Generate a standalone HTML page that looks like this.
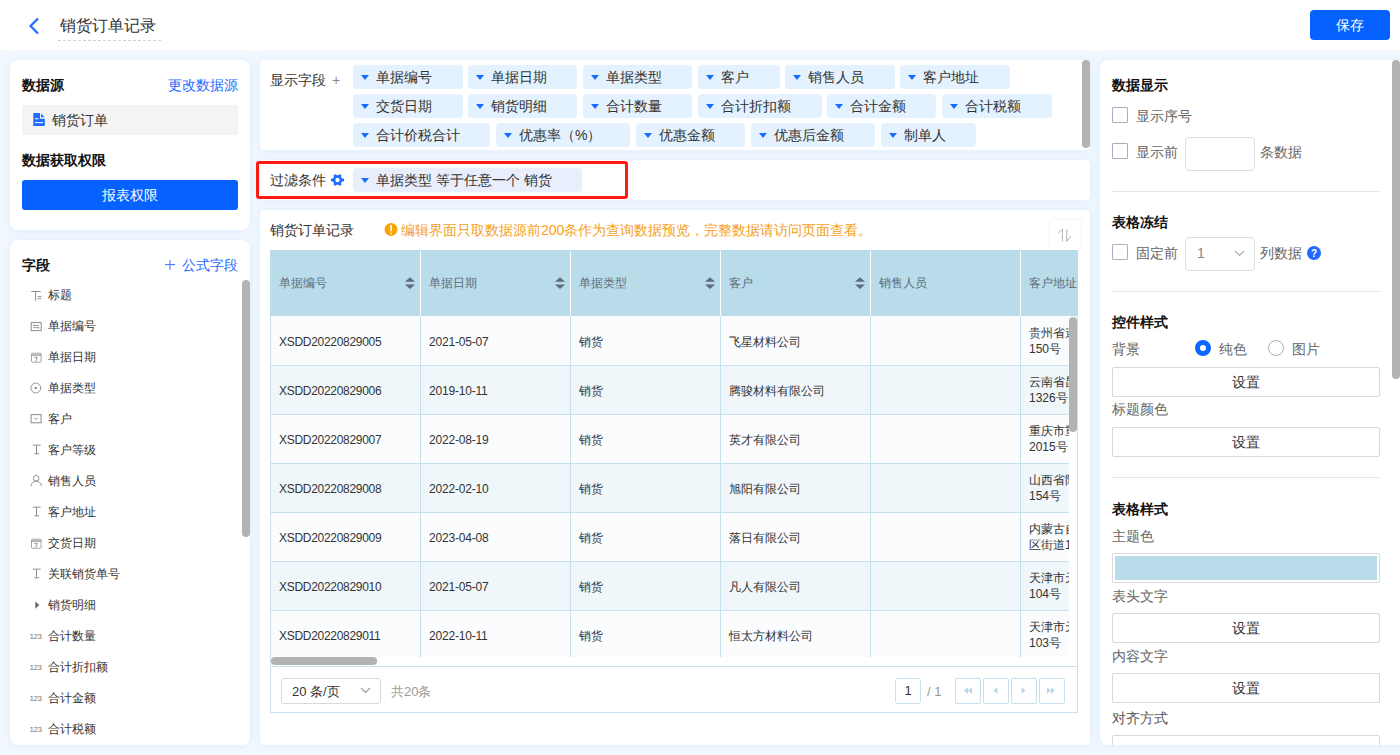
<!DOCTYPE html><html><head><meta charset="utf-8"><style>
*{box-sizing:border-box;margin:0;padding:0}
html,body{width:1400px;height:755px;overflow:hidden}
body{font-family:"Liberation Sans",sans-serif;color:#333;background:#f2f8fe;position:relative}
.abs{position:absolute}
.t{position:absolute;white-space:nowrap;line-height:1}
.hdr{left:0;top:0;width:1400px;height:50px;background:#fff}
.card{position:absolute;background:#fff;box-shadow:0 0 7px rgba(200,228,255,.5)}
.b{font-weight:bold}
.blue{color:#1f6bff}
.tag{position:absolute;height:24px;border-radius:4px;background:#e3f2fe;font-size:14px;line-height:24px;color:#333;padding-left:23px;white-space:nowrap}
.tag:before{content:"";position:absolute;left:8px;top:10px;border-left:4px solid transparent;border-right:4px solid transparent;border-top:5px solid #1a6cff}
.sb{position:absolute;background:#b3b3b3;border-radius:4px}
.btn{position:absolute;border:1px solid #d9d9d9;border-radius:2px;background:#fff;font-size:14px;text-align:center;color:#333}
.cb{position:absolute;width:16px;height:16px;border:1px solid #a9aec0;border-radius:1px;background:#fff}
.lbl{position:absolute;font-size:14px;color:#666;white-space:nowrap;line-height:1}
.sec{position:absolute;font-size:14px;font-weight:bold;color:#111;white-space:nowrap;line-height:1}
.hr{position:absolute;height:1px;background:#e6e6e6}
</style></head><body>
<div class="abs hdr"></div>
<svg class="abs" style="left:28px;top:17px" width="12" height="18" viewBox="0 0 12 18"><polyline points="10,1.5 2.5,9 10,16.5" fill="none" stroke="#1f6bff" stroke-width="2.2"/></svg>
<div class="t" style="left:60px;top:18px;font-size:16px;color:#333">销货订单记录</div>
<div class="abs" style="left:58px;top:40px;width:105px;height:1px;background:repeating-linear-gradient(90deg,#d3d3d3 0 3px,transparent 3px 5px)"></div>
<div class="abs" style="left:1310px;top:10px;width:80px;height:30px;border-radius:4px;background:#0562ff;color:#fff;font-size:14px;line-height:30px;text-align:center">保存</div>
<div class="card" style="left:10px;top:60px;width:240px;height:170px;border-radius:8px"></div>
<div class="sec" style="left:22px;top:78px">数据源</div>
<div class="t blue" style="left:168px;top:78px;font-size:14px">更改数据源</div>
<div class="abs" style="left:22px;top:105px;width:216px;height:30px;background:#f4f4f4;border-radius:2px"></div>
<svg class="abs" style="left:33px;top:113px" width="12" height="13" viewBox="0 0 12 13"><path d="M0.3 0h6.7v5.8h4.8v7.2h-11.5z" fill="#1f6bff"/><path d="M8 0.6l3.6 3.6h-3.6z" fill="#1f6bff"/><rect x="1.8" y="5.2" width="3.8" height="1" fill="#fff"/><rect x="1.8" y="9.1" width="8.3" height="1" fill="#fff"/></svg>
<div class="t" style="left:52px;top:113px;font-size:14px;color:#333">销货订单</div>
<div class="sec" style="left:22px;top:153px">数据获取权限</div>
<div class="abs" style="left:22px;top:180px;width:216px;height:30px;border-radius:3px;background:#0562ff;color:#fff;font-size:14px;line-height:30px;text-align:center">报表权限</div>
<div class="card" style="left:10px;top:240px;width:240px;height:505px;border-radius:8px;overflow:hidden"></div>
<div class="sec" style="left:22px;top:258px">字段</div>
<svg class="abs" style="left:165px;top:260px" width="10" height="10" viewBox="0 0 10 10"><path d="M0 4.6h10M5 0v10" stroke="#3d74ff" stroke-width="1"/></svg>
<div class="t blue" style="left:182px;top:258px;font-size:14px">公式字段</div>
<div class="sb" style="left:242px;top:280px;width:8px;height:257px"></div>
<svg class="abs" style="left:30px;top:289px" width="12" height="12" viewBox="0 0 12 12"><path d="M1.2 2.5h9.5M5.6 2.5v9.2" stroke="#909090" stroke-width="1" fill="none"/><path d="M7.5 7.6h3.9M7.5 9.6h3.9" stroke="#808080" stroke-width=".8" fill="none"/></svg>
<div class="t" style="left:48px;top:289px;font-size:12px;color:#333">标题</div>
<svg class="abs" style="left:30px;top:320px" width="12" height="12" viewBox="0 0 12 12"><rect x="1.2" y="2.6" width="10" height="8" fill="none" stroke="#8a8a8a" stroke-width="1"/><path d="M3.2 5.5h6M3.2 5.5l1.4-1.1M3.2 7.6h6M9.2 7.6l-1.4 1.1" stroke="#8a8a8a" stroke-width=".8" fill="none"/></svg>
<div class="t" style="left:48px;top:320px;font-size:12px;color:#333">单据编号</div>
<svg class="abs" style="left:30px;top:351px" width="12" height="12" viewBox="0 0 12 12"><rect x="1.5" y="2.2" width="9.6" height="9" rx="1" fill="none" stroke="#9a9a9a" stroke-width=".9"/><path d="M1.5 4h9.6" stroke="#888" stroke-width="1.2"/><path d="M4.3 6.3h3l-1.6 4" stroke="#888" stroke-width=".9" fill="none"/></svg>
<div class="t" style="left:48px;top:351px;font-size:12px;color:#333">单据日期</div>
<svg class="abs" style="left:30px;top:382px" width="12" height="12" viewBox="0 0 12 12"><circle cx="5.8" cy="6" r="4.9" fill="none" stroke="#8a8a8a" stroke-width=".9"/><circle cx="5.8" cy="6" r="1.1" fill="#666"/></svg>
<div class="t" style="left:48px;top:382px;font-size:12px;color:#333">单据类型</div>
<svg class="abs" style="left:30px;top:413px" width="12" height="12" viewBox="0 0 12 12"><rect x="1.1" y="1.6" width="10" height="8.2" fill="none" stroke="#8a8a8a" stroke-width="1"/><path d="M4.3 4.8l1.8 1.6 1.8-1.6" stroke="#8a8a8a" stroke-width=".9" fill="none"/></svg>
<div class="t" style="left:48px;top:413px;font-size:12px;color:#333">客户</div>
<svg class="abs" style="left:30px;top:444px" width="12" height="12" viewBox="0 0 12 12"><path d="M2.8 1.2h7.8" stroke="#aaa" stroke-width="1.3" fill="none"/><path d="M6.5 1.2v8.6M4.4 9.8h4.7" stroke="#8a8a8a" stroke-width="1" fill="none"/></svg>
<div class="t" style="left:48px;top:444px;font-size:12px;color:#333">客户等级</div>
<svg class="abs" style="left:30px;top:475px" width="12" height="12" viewBox="0 0 12 12"><circle cx="6.2" cy="3.2" r="2.8" fill="none" stroke="#8a8a8a" stroke-width=".9"/><path d="M0.8 11.2c.7-3.3 2.8-5 5.4-5s4.7 1.7 5.4 5" fill="none" stroke="#8a8a8a" stroke-width=".9"/></svg>
<div class="t" style="left:48px;top:475px;font-size:12px;color:#333">销售人员</div>
<svg class="abs" style="left:30px;top:506px" width="12" height="12" viewBox="0 0 12 12"><path d="M2.8 1.2h7.8" stroke="#aaa" stroke-width="1.3" fill="none"/><path d="M6.5 1.2v8.6M4.4 9.8h4.7" stroke="#8a8a8a" stroke-width="1" fill="none"/></svg>
<div class="t" style="left:48px;top:506px;font-size:12px;color:#333">客户地址</div>
<svg class="abs" style="left:30px;top:537px" width="12" height="12" viewBox="0 0 12 12"><rect x="1.5" y="2.2" width="9.6" height="9" rx="1" fill="none" stroke="#9a9a9a" stroke-width=".9"/><path d="M1.5 4h9.6" stroke="#888" stroke-width="1.2"/><path d="M4.3 6.3h3l-1.6 4" stroke="#888" stroke-width=".9" fill="none"/></svg>
<div class="t" style="left:48px;top:537px;font-size:12px;color:#333">交货日期</div>
<svg class="abs" style="left:30px;top:568px" width="12" height="12" viewBox="0 0 12 12"><path d="M2.8 1.2h7.8" stroke="#aaa" stroke-width="1.3" fill="none"/><path d="M6.5 1.2v8.6M4.4 9.8h4.7" stroke="#8a8a8a" stroke-width="1" fill="none"/></svg>
<div class="t" style="left:48px;top:568px;font-size:12px;color:#333">关联销货单号</div>
<svg class="abs" style="left:30px;top:599px" width="12" height="12" viewBox="0 0 12 12"><path d="M5.3 2.5l4 3.6-4 3.6z" fill="#666"/></svg>
<div class="t" style="left:48px;top:599px;font-size:12px;color:#333">销货明细</div>
<div class="t" style="left:29.5px;top:632.5px;font-size:8px;color:#777;letter-spacing:-.4px">123</div>
<div class="t" style="left:48px;top:630px;font-size:12px;color:#333">合计数量</div>
<div class="t" style="left:29.5px;top:663.5px;font-size:8px;color:#777;letter-spacing:-.4px">123</div>
<div class="t" style="left:48px;top:661px;font-size:12px;color:#333">合计折扣额</div>
<div class="t" style="left:29.5px;top:694.5px;font-size:8px;color:#777;letter-spacing:-.4px">123</div>
<div class="t" style="left:48px;top:692px;font-size:12px;color:#333">合计金额</div>
<div class="t" style="left:29.5px;top:725.5px;font-size:8px;color:#777;letter-spacing:-.4px">123</div>
<div class="t" style="left:48px;top:723px;font-size:12px;color:#333">合计税额</div>
<div class="card" style="left:260px;top:60px;width:830px;height:90px;border-radius:4px"></div>
<div class="t" style="left:270px;top:73px;font-size:14px;color:#333">显示字段 <span style="color:#888;margin-left:2px">+</span></div>
<div class="tag" style="left:353px;top:65px;width:110px">单据编号</div>
<div class="tag" style="left:468px;top:65px;width:109px">单据日期</div>
<div class="tag" style="left:583px;top:65px;width:109px">单据类型</div>
<div class="tag" style="left:698px;top:65px;width:82px">客户</div>
<div class="tag" style="left:785px;top:65px;width:110px">销售人员</div>
<div class="tag" style="left:900px;top:65px;width:110px">客户地址</div>
<div class="tag" style="left:353px;top:94px;width:110px">交货日期</div>
<div class="tag" style="left:468px;top:94px;width:109px">销货明细</div>
<div class="tag" style="left:583px;top:94px;width:109px">合计数量</div>
<div class="tag" style="left:698px;top:94px;width:124px">合计折扣额</div>
<div class="tag" style="left:827px;top:94px;width:109px">合计金额</div>
<div class="tag" style="left:942px;top:94px;width:110px">合计税额</div>
<div class="tag" style="left:353px;top:123px;width:137px">合计价税合计</div>
<div class="tag" style="left:496px;top:123px;width:134px">优惠率（%）</div>
<div class="tag" style="left:636px;top:123px;width:109px">优惠金额</div>
<div class="tag" style="left:751px;top:123px;width:124px">优惠后金额</div>
<div class="tag" style="left:881px;top:123px;width:95px">制单人</div>
<div class="sb" style="left:1082px;top:60px;width:8px;height:88px"></div>
<div class="card" style="left:260px;top:160px;width:830px;height:40px;border-radius:4px"></div>
<div class="t" style="left:270px;top:173px;font-size:14px;color:#333">过滤条件</div>
<svg class="abs" style="left:330px;top:173px" width="15" height="14" viewBox="0 0 15 14"><g fill="#1a6dff" transform="translate(7.5 7)"><circle r="4.7"/><rect x="-1.5" y="-6.6" width="3" height="13.2" rx=".9" transform="rotate(90)"/><rect x="-1.5" y="-6" width="3" height="12" rx=".9" transform="rotate(30)"/><rect x="-1.5" y="-6" width="3" height="12" rx=".9" transform="rotate(-30)"/></g><circle cx="7.5" cy="7" r="2.2" fill="#fff"/></svg>
<div class="tag" style="left:353px;top:168px;width:229px;background:#e8eefb">单据类型 等于任意一个 销货</div>
<div class="abs" style="left:256px;top:161px;width:372px;height:38px;border:3px solid #fe1a12;border-radius:3px"></div>
<div class="card" style="left:260px;top:210px;width:830px;height:535px;border-radius:4px"></div>
<div class="t" style="left:270px;top:223px;font-size:14px;color:#333">销货订单记录</div>
<svg class="abs" style="left:384px;top:223px" width="14" height="14" viewBox="0 0 14 14"><circle cx="7" cy="6.5" r="6.5" fill="#fba304"/><path d="M6 2.2h2l-.4 6.4h-1.2z" fill="#fff"/><rect x="6.2" y="9.7" width="1.6" height="1.5" fill="#fff"/></svg>
<div class="t" style="left:401px;top:223px;font-size:14px;color:#f6a01a">编辑界面只取数据源前200条作为查询数据预览，完整数据请访问页面查看。</div>
<div class="abs" style="left:1050px;top:220px;width:30px;height:30px;background:#fff;box-shadow:0 0 3px rgba(0,0,0,.08)"></div>
<svg class="abs" style="left:1057px;top:228px" width="16" height="16" viewBox="0 0 16 16"><path d="M5.4 1.2v12.2M5.4 1.2L1.3 5" stroke="#b5b0b0" stroke-width="1" fill="none"/><path d="M9.8 1.2v12.2M9.8 13.4l4.2-5.4" stroke="#b5b0b0" stroke-width="1" fill="none"/></svg>
<div class="abs" style="left:270px;top:250px;width:808px;height:66px;background:#b8dcea;overflow:hidden">
<div class="t" style="left:9px;top:27px;font-size:12px;color:#5d6b7b">单据编号</div>
<svg class="abs" style="left:135px;top:27px" width="10" height="12" viewBox="0 0 10 12"><path d="M5 0.3l5 4.5h-10z M5 12l5-4.5h-10z" fill="#5f6b7c"/></svg>
<div class="abs" style="left:150px;top:1px;width:1px;height:65px;background:#fff"></div>
<div class="t" style="left:159px;top:27px;font-size:12px;color:#5d6b7b">单据日期</div>
<svg class="abs" style="left:285px;top:27px" width="10" height="12" viewBox="0 0 10 12"><path d="M5 0.3l5 4.5h-10z M5 12l5-4.5h-10z" fill="#5f6b7c"/></svg>
<div class="abs" style="left:300px;top:1px;width:1px;height:65px;background:#fff"></div>
<div class="t" style="left:309px;top:27px;font-size:12px;color:#5d6b7b">单据类型</div>
<svg class="abs" style="left:435px;top:27px" width="10" height="12" viewBox="0 0 10 12"><path d="M5 0.3l5 4.5h-10z M5 12l5-4.5h-10z" fill="#5f6b7c"/></svg>
<div class="abs" style="left:450px;top:1px;width:1px;height:65px;background:#fff"></div>
<div class="t" style="left:459px;top:27px;font-size:12px;color:#5d6b7b">客户</div>
<svg class="abs" style="left:585px;top:27px" width="10" height="12" viewBox="0 0 10 12"><path d="M5 0.3l5 4.5h-10z M5 12l5-4.5h-10z" fill="#5f6b7c"/></svg>
<div class="abs" style="left:600px;top:1px;width:1px;height:65px;background:#fff"></div>
<div class="t" style="left:609px;top:27px;font-size:12px;color:#5d6b7b">销售人员</div>
<div class="abs" style="left:750px;top:1px;width:1px;height:65px;background:#fff"></div>
<div class="t" style="left:759px;top:27px;font-size:12px;color:#5d6b7b">客户地址</div>
</div>
<div class="abs" style="left:270px;top:316px;width:808px;height:397px;border:1px solid #c6e1eb;border-top:none;background:#fff"></div>
<div class="abs" style="left:271px;top:316px;width:798px;height:341px;overflow:hidden;background:#fafcfe">
<div class="abs" style="left:0;top:1px;width:900px;height:49px;background:#fafcfe;border-bottom:1px solid #c6e1eb"></div>
<div class="t" style="left:8px;top:20px;font-size:12px;color:#333;letter-spacing:-0.3px">XSDD20220829005</div>
<div class="abs" style="left:149px;top:0px;width:1px;height:50px;background:#c6e1eb"></div>
<div class="t" style="left:158px;top:20px;font-size:12px;color:#333;letter-spacing:-0.2px">2021-05-07</div>
<div class="abs" style="left:299px;top:0px;width:1px;height:50px;background:#c6e1eb"></div>
<div class="t" style="left:308px;top:20px;font-size:12px;color:#333;letter-spacing:0px">销货</div>
<div class="abs" style="left:449px;top:0px;width:1px;height:50px;background:#c6e1eb"></div>
<div class="t" style="left:458px;top:20px;font-size:12px;color:#333;letter-spacing:0px">飞星材料公司</div>
<div class="abs" style="left:599px;top:0px;width:1px;height:50px;background:#c6e1eb"></div>
<div class="abs" style="left:749px;top:0px;width:1px;height:50px;background:#c6e1eb"></div>
<div class="abs" style="left:758px;top:10px;font-size:12px;line-height:15.5px;color:#333;white-space:nowrap">贵州省遵义市汇川区<br>150号</div>
<div class="abs" style="left:0;top:50px;width:900px;height:49px;background:#f0f7fa;border-bottom:1px solid #c6e1eb"></div>
<div class="t" style="left:8px;top:69px;font-size:12px;color:#333;letter-spacing:-0.3px">XSDD20220829006</div>
<div class="abs" style="left:149px;top:49px;width:1px;height:50px;background:#c6e1eb"></div>
<div class="t" style="left:158px;top:69px;font-size:12px;color:#333;letter-spacing:-0.2px">2019-10-11</div>
<div class="abs" style="left:299px;top:49px;width:1px;height:50px;background:#c6e1eb"></div>
<div class="t" style="left:308px;top:69px;font-size:12px;color:#333;letter-spacing:0px">销货</div>
<div class="abs" style="left:449px;top:49px;width:1px;height:50px;background:#c6e1eb"></div>
<div class="t" style="left:458px;top:69px;font-size:12px;color:#333;letter-spacing:0px">腾骏材料有限公司</div>
<div class="abs" style="left:599px;top:49px;width:1px;height:50px;background:#c6e1eb"></div>
<div class="abs" style="left:749px;top:49px;width:1px;height:50px;background:#c6e1eb"></div>
<div class="abs" style="left:758px;top:59px;font-size:12px;line-height:15.5px;color:#333;white-space:nowrap">云南省昆明市五华区<br>1326号</div>
<div class="abs" style="left:0;top:99px;width:900px;height:49px;background:#fafcfe;border-bottom:1px solid #c6e1eb"></div>
<div class="t" style="left:8px;top:118px;font-size:12px;color:#333;letter-spacing:-0.3px">XSDD20220829007</div>
<div class="abs" style="left:149px;top:98px;width:1px;height:50px;background:#c6e1eb"></div>
<div class="t" style="left:158px;top:118px;font-size:12px;color:#333;letter-spacing:-0.2px">2022-08-19</div>
<div class="abs" style="left:299px;top:98px;width:1px;height:50px;background:#c6e1eb"></div>
<div class="t" style="left:308px;top:118px;font-size:12px;color:#333;letter-spacing:0px">销货</div>
<div class="abs" style="left:449px;top:98px;width:1px;height:50px;background:#c6e1eb"></div>
<div class="t" style="left:458px;top:118px;font-size:12px;color:#333;letter-spacing:0px">英才有限公司</div>
<div class="abs" style="left:599px;top:98px;width:1px;height:50px;background:#c6e1eb"></div>
<div class="abs" style="left:749px;top:98px;width:1px;height:50px;background:#c6e1eb"></div>
<div class="abs" style="left:758px;top:108px;font-size:12px;line-height:15.5px;color:#333;white-space:nowrap">重庆市重庆市渝中区<br>2015号</div>
<div class="abs" style="left:0;top:148px;width:900px;height:49px;background:#f0f7fa;border-bottom:1px solid #c6e1eb"></div>
<div class="t" style="left:8px;top:167px;font-size:12px;color:#333;letter-spacing:-0.3px">XSDD20220829008</div>
<div class="abs" style="left:149px;top:147px;width:1px;height:50px;background:#c6e1eb"></div>
<div class="t" style="left:158px;top:167px;font-size:12px;color:#333;letter-spacing:-0.2px">2022-02-10</div>
<div class="abs" style="left:299px;top:147px;width:1px;height:50px;background:#c6e1eb"></div>
<div class="t" style="left:308px;top:167px;font-size:12px;color:#333;letter-spacing:0px">销货</div>
<div class="abs" style="left:449px;top:147px;width:1px;height:50px;background:#c6e1eb"></div>
<div class="t" style="left:458px;top:167px;font-size:12px;color:#333;letter-spacing:0px">旭阳有限公司</div>
<div class="abs" style="left:599px;top:147px;width:1px;height:50px;background:#c6e1eb"></div>
<div class="abs" style="left:749px;top:147px;width:1px;height:50px;background:#c6e1eb"></div>
<div class="abs" style="left:758px;top:157px;font-size:12px;line-height:15.5px;color:#333;white-space:nowrap">山西省阳泉市城区<br>154号</div>
<div class="abs" style="left:0;top:197px;width:900px;height:49px;background:#fafcfe;border-bottom:1px solid #c6e1eb"></div>
<div class="t" style="left:8px;top:216px;font-size:12px;color:#333;letter-spacing:-0.3px">XSDD20220829009</div>
<div class="abs" style="left:149px;top:196px;width:1px;height:50px;background:#c6e1eb"></div>
<div class="t" style="left:158px;top:216px;font-size:12px;color:#333;letter-spacing:-0.2px">2023-04-08</div>
<div class="abs" style="left:299px;top:196px;width:1px;height:50px;background:#c6e1eb"></div>
<div class="t" style="left:308px;top:216px;font-size:12px;color:#333;letter-spacing:0px">销货</div>
<div class="abs" style="left:449px;top:196px;width:1px;height:50px;background:#c6e1eb"></div>
<div class="t" style="left:458px;top:216px;font-size:12px;color:#333;letter-spacing:0px">落日有限公司</div>
<div class="abs" style="left:599px;top:196px;width:1px;height:50px;background:#c6e1eb"></div>
<div class="abs" style="left:749px;top:196px;width:1px;height:50px;background:#c6e1eb"></div>
<div class="abs" style="left:758px;top:206px;font-size:12px;line-height:15.5px;color:#333;white-space:nowrap">内蒙古自治区呼和浩特<br>区街道101号</div>
<div class="abs" style="left:0;top:246px;width:900px;height:49px;background:#f0f7fa;border-bottom:1px solid #c6e1eb"></div>
<div class="t" style="left:8px;top:265px;font-size:12px;color:#333;letter-spacing:-0.3px">XSDD20220829010</div>
<div class="abs" style="left:149px;top:245px;width:1px;height:50px;background:#c6e1eb"></div>
<div class="t" style="left:158px;top:265px;font-size:12px;color:#333;letter-spacing:-0.2px">2021-05-07</div>
<div class="abs" style="left:299px;top:245px;width:1px;height:50px;background:#c6e1eb"></div>
<div class="t" style="left:308px;top:265px;font-size:12px;color:#333;letter-spacing:0px">销货</div>
<div class="abs" style="left:449px;top:245px;width:1px;height:50px;background:#c6e1eb"></div>
<div class="t" style="left:458px;top:265px;font-size:12px;color:#333;letter-spacing:0px">凡人有限公司</div>
<div class="abs" style="left:599px;top:245px;width:1px;height:50px;background:#c6e1eb"></div>
<div class="abs" style="left:749px;top:245px;width:1px;height:50px;background:#c6e1eb"></div>
<div class="abs" style="left:758px;top:255px;font-size:12px;line-height:15.5px;color:#333;white-space:nowrap">天津市天津市和平区<br>104号</div>
<div class="abs" style="left:0;top:295px;width:900px;height:49px;background:#fafcfe;border-bottom:1px solid #c6e1eb"></div>
<div class="t" style="left:8px;top:314px;font-size:12px;color:#333;letter-spacing:-0.3px">XSDD20220829011</div>
<div class="abs" style="left:149px;top:294px;width:1px;height:50px;background:#c6e1eb"></div>
<div class="t" style="left:158px;top:314px;font-size:12px;color:#333;letter-spacing:-0.2px">2022-10-11</div>
<div class="abs" style="left:299px;top:294px;width:1px;height:50px;background:#c6e1eb"></div>
<div class="t" style="left:308px;top:314px;font-size:12px;color:#333;letter-spacing:0px">销货</div>
<div class="abs" style="left:449px;top:294px;width:1px;height:50px;background:#c6e1eb"></div>
<div class="t" style="left:458px;top:314px;font-size:12px;color:#333;letter-spacing:0px">恒太方材料公司</div>
<div class="abs" style="left:599px;top:294px;width:1px;height:50px;background:#c6e1eb"></div>
<div class="abs" style="left:749px;top:294px;width:1px;height:50px;background:#c6e1eb"></div>
<div class="abs" style="left:758px;top:304px;font-size:12px;line-height:15.5px;color:#333;white-space:nowrap">天津市天津市河西区<br>103号</div>
</div>
<div class="sb" style="left:1069px;top:317px;width:8px;height:115px"></div>
<div class="sb" style="left:271px;top:657px;width:106px;height:8px"></div>
<div class="abs" style="left:270px;top:666px;width:808px;height:1px;background:#c6e1eb"></div>
<div class="abs" style="left:281px;top:678px;width:100px;height:26px;border:1px solid #d9d9d9;border-radius:3px;background:#fff"></div>
<div class="t" style="left:292px;top:685px;font-size:13px;color:#333">20 条/页</div>
<svg class="abs" style="left:360px;top:687px" width="11" height="7" viewBox="0 0 11 7"><path d="M1 1l4.5 4.5L10 1" fill="none" stroke="#999" stroke-width="1.1"/></svg>
<div class="t" style="left:391px;top:685px;font-size:13px;color:#999">共20条</div>
<div class="abs" style="left:895px;top:678px;width:26px;height:26px;border:1px solid #c6e1eb;border-radius:3px;background:#fff;font-size:13px;line-height:24px;text-align:center;color:#333">1</div>
<div class="t" style="left:927px;top:685px;font-size:13px;color:#999">/ 1</div>
<div class="abs" style="left:955px;top:678px;width:26px;height:26px;border:1px solid #c6e1eb;border-radius:2px;background:#fff"></div>
<svg class="abs" style="left:961px;top:684px" width="13" height="13" viewBox="0 0 13 13"><path d="M7 3l-4 3.5 4 3.5zM11 3l-4 3.5 4 3.5z" fill="#b9dbe8"/></svg>
<div class="abs" style="left:983px;top:678px;width:26px;height:26px;border:1px solid #c6e1eb;border-radius:2px;background:#fff"></div>
<svg class="abs" style="left:989px;top:684px" width="13" height="13" viewBox="0 0 13 13"><path d="M8.5 3l-4 3.5 4 3.5z" fill="#b9dbe8"/></svg>
<div class="abs" style="left:1011px;top:678px;width:26px;height:26px;border:1px solid #c6e1eb;border-radius:2px;background:#fff"></div>
<svg class="abs" style="left:1017px;top:684px" width="13" height="13" viewBox="0 0 13 13"><path d="M4.5 3l4 3.5-4 3.5z" fill="#b9dbe8"/></svg>
<div class="abs" style="left:1039px;top:678px;width:26px;height:26px;border:1px solid #c6e1eb;border-radius:2px;background:#fff"></div>
<svg class="abs" style="left:1045px;top:684px" width="13" height="13" viewBox="0 0 13 13"><path d="M2 3l4 3.5-4 3.5zM6 3l4 3.5-4 3.5z" fill="#b9dbe8"/></svg>
<div class="card" style="left:1100px;top:60px;width:300px;height:685px;border-radius:8px 0 0 8px"></div>
<div class="sb" style="left:1392px;top:60px;width:8px;height:319px"></div>
<div class="sec" style="left:1112px;top:78px">数据显示</div>
<div class="cb" style="left:1112px;top:107px"></div>
<div class="lbl" style="left:1136px;top:109px">显示序号</div>
<div class="cb" style="left:1112px;top:143px"></div>
<div class="lbl" style="left:1136px;top:145px">显示前</div>
<div class="abs" style="left:1185px;top:137px;width:70px;height:34px;border:1px solid #dcdcdc;border-radius:4px"></div>
<div class="lbl" style="left:1260px;top:145px">条数据</div>
<div class="hr" style="left:1112px;top:191px;width:268px"></div>
<div class="sec" style="left:1112px;top:215px">表格冻结</div>
<div class="cb" style="left:1112px;top:244px"></div>
<div class="lbl" style="left:1136px;top:246px">固定前</div>
<div class="abs" style="left:1185px;top:237px;width:70px;height:34px;border:1px solid #dcdcdc;border-radius:4px"></div>
<div class="lbl" style="left:1197px;top:246px;color:#888">1</div>
<svg class="abs" style="left:1234px;top:250px" width="11" height="7" viewBox="0 0 11 7"><path d="M1 1l4.5 4.5L10 1" fill="none" stroke="#aaa" stroke-width="1.1"/></svg>
<div class="lbl" style="left:1260px;top:246px">列数据</div>
<svg class="abs" style="left:1307px;top:246px" width="14" height="14" viewBox="0 0 14 14"><circle cx="7" cy="7" r="7" fill="#1f6bff"/><text x="7" y="11" font-size="10" font-weight="bold" text-anchor="middle" fill="#fff" font-family="Liberation Sans">?</text></svg>
<div class="hr" style="left:1112px;top:291px;width:268px"></div>
<div class="sec" style="left:1112px;top:315px">控件样式</div>
<div class="lbl" style="left:1112px;top:342px">背景</div>
<div class="abs" style="left:1195px;top:340px;width:16px;height:16px;border-radius:50%;border:5px solid #0a66ff;background:#fff"></div>
<div class="lbl" style="left:1219px;top:342px">纯色</div>
<div class="abs" style="left:1268px;top:340px;width:16px;height:16px;border-radius:50%;border:1px solid #a9aec0;background:#fff"></div>
<div class="lbl" style="left:1292px;top:342px">图片</div>
<div class="btn" style="left:1112px;top:367px;width:268px;height:30px;line-height:28px">设置</div>
<div class="lbl" style="left:1112px;top:402px">标题颜色</div>
<div class="btn" style="left:1112px;top:427px;width:268px;height:30px;line-height:28px">设置</div>
<div class="hr" style="left:1112px;top:477px;width:268px"></div>
<div class="sec" style="left:1112px;top:502px">表格样式</div>
<div class="lbl" style="left:1112px;top:529px">主题色</div>
<div class="abs" style="left:1112px;top:553px;width:268px;height:30px;border:1px solid #d9d9d9;border-radius:2px;padding:2px"><div style="width:100%;height:100%;background:#b8dcea"></div></div>
<div class="lbl" style="left:1112px;top:589px">表头文字</div>
<div class="btn" style="left:1112px;top:613px;width:268px;height:30px;line-height:28px">设置</div>
<div class="lbl" style="left:1112px;top:649px">内容文字</div>
<div class="btn" style="left:1112px;top:673px;width:268px;height:30px;line-height:28px">设置</div>
<div class="lbl" style="left:1112px;top:711px;color:#555">对齐方式</div>
<div class="abs" style="left:1100px;top:735px;width:292px;height:10px;overflow:hidden"><div class="btn" style="left:12px;top:0;width:268px;height:30px"></div></div>
</body></html>
